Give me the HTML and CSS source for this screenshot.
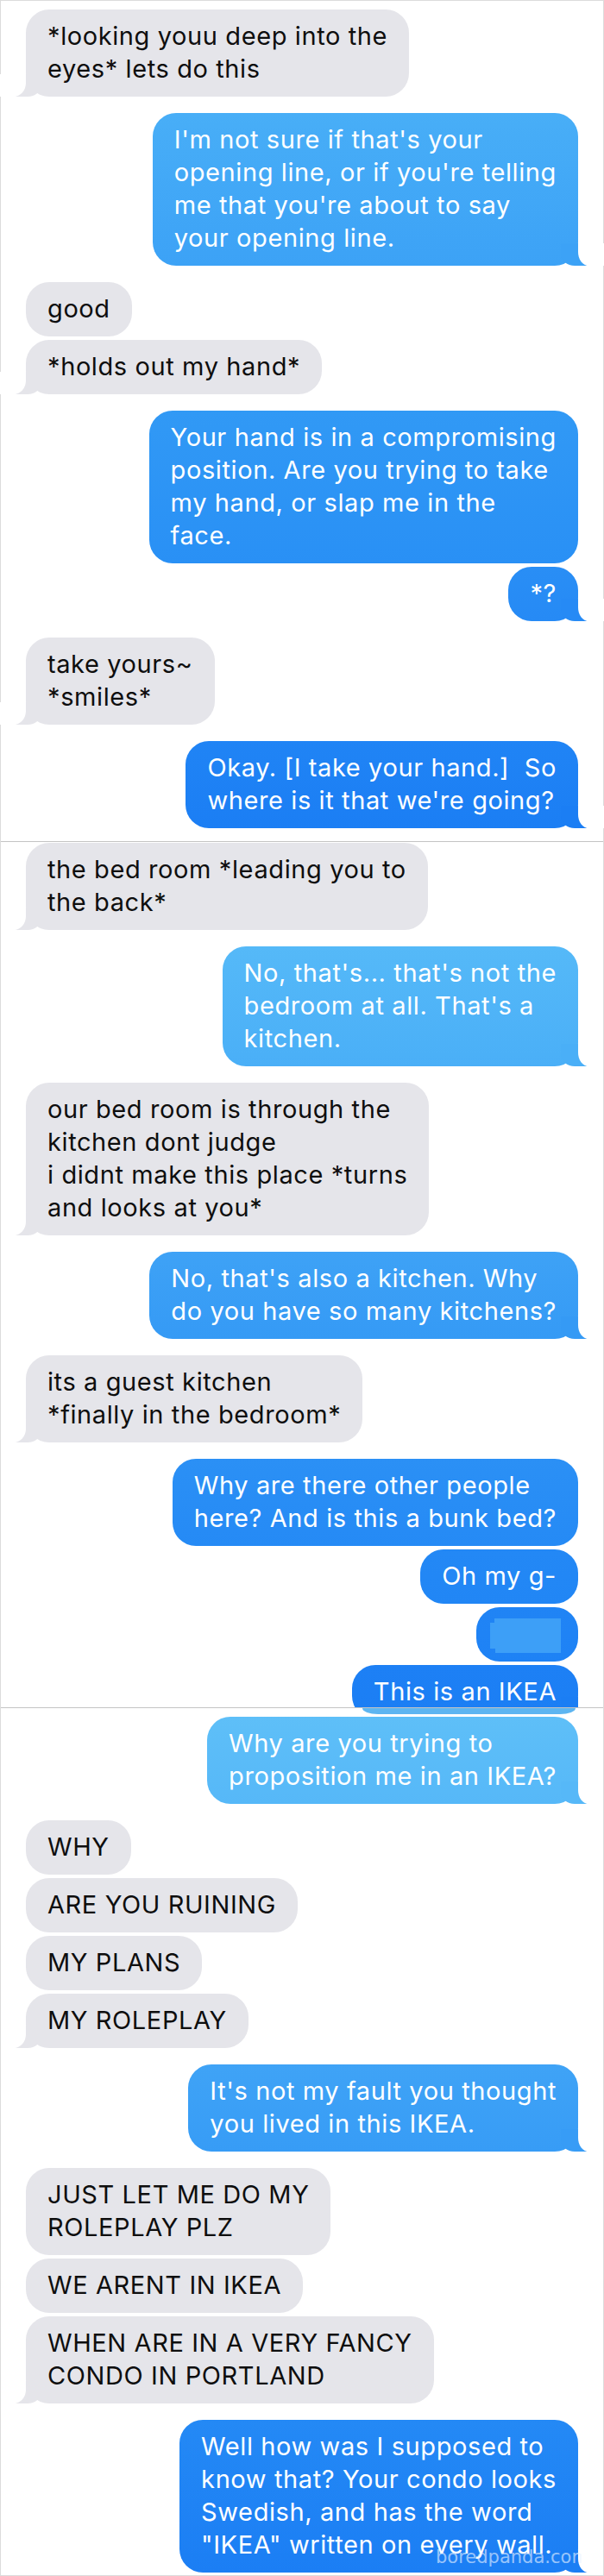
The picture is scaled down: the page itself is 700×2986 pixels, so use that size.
FILE: index.html
```html
<!DOCTYPE html>
<html lang="en">
<head>
<meta charset="utf-8">
<title>Messages</title>
<link rel="stylesheet" href="styles.css">
</head>
<body>
<div class="page">

  <section class="panel panel-1">
    <div class="msg in tail">*looking youu deep into the<br>eyes* lets do this</div>
    <div class="msg out tail shade-a">I'm not sure if that's your<br>opening line, or if you're telling<br>me that you're about to say<br>your opening line.</div>
    <div class="msg in">good</div>
    <div class="msg in same tail">*holds out my hand*</div>
    <div class="msg out shade-b">Your hand is in a compromising<br>position. Are you trying to take<br>my hand, or slap me in the<br>face.</div>
    <div class="msg out same tail shade-c">*?</div>
    <div class="msg in tail">take yours~<br>*smiles*</div>
    <div class="msg out tail shade-d">Okay. [I take your hand.]&nbsp; So<br>where is it that we're going?</div>
  </section>

  <section class="panel panel-2">
    <div class="msg in tail">the bed room *leading you to<br>the back*</div>
    <div class="msg out tail shade-e">No, that's... that's not the<br>bedroom at all. That's a<br>kitchen.</div>
    <div class="msg in tail">our bed room is through the<br>kitchen dont judge<br>i didnt make this place *turns<br>and looks at you*</div>
    <div class="msg out tail shade-f">No, that's also a kitchen. Why<br>do you have so many kitchens?</div>
    <div class="msg in tail">its a guest kitchen<br>*finally in the bedroom*</div>
    <div class="msg out shade-g">Why are there other people<br>here? And is this a bunk bed?</div>
    <div class="msg out same shade-h">Oh my g-</div>
    <div class="msg out same blank shade-i"><span class="blot"></span></div>
    <div class="msg out same tail shade-j">This is an IKEA</div>
  </section>

  <section class="panel panel-3">
    <div class="bubble-edge"></div>
    <div class="msg out tail shade-k">Why are you trying to<br>proposition me in an IKEA?</div>
    <div class="msg in">WHY</div>
    <div class="msg in same">ARE YOU RUINING</div>
    <div class="msg in same">MY PLANS</div>
    <div class="msg in same tail">MY ROLEPLAY</div>
    <div class="msg out tail shade-l">It's not my fault you thought<br>you lived in this IKEA.</div>
    <div class="msg in">JUST LET ME DO MY<br>ROLEPLAY PLZ</div>
    <div class="msg in same">WE ARENT IN IKEA</div>
    <div class="msg in same tail">WHEN ARE IN A VERY FANCY<br>CONDO IN PORTLAND</div>
    <div class="msg out tail shade-m">Well how was I supposed to<br>know that? Your condo looks<br>Swedish, and has the word<br>&quot;IKEA&quot; written on every wall.</div>
    <div class="mark">boredpanda.com</div>
  </section>

</div>
</body>
</html>
```

FILE: styles.css
```css
* {
  box-sizing: border-box;
}

body {
  margin: 0;
  background: #fff;
  font-family: Inter, "Liberation Sans", sans-serif;
}

.page {
  width: 700px;
  border: 1px solid #dcdcdc;
}

/* each panel is one captured screen of the thread */
.panel {
  position: relative;
  display: flex;
  flex-direction: column;
  padding: 0 29px;
}

.panel + .panel {
  border-top: 1px solid #c4c4c4;
}

.panel-1 {
  padding-top: 10px;
  padding-bottom: 15px;
}

.panel-2 {
  height: 1004px;
  padding-top: 1px;
  overflow: hidden;
}

.panel-3 {
  height: 1006px;
  overflow: hidden;
}

/* message bubbles */
.msg {
  position: relative;
  padding: 12px 25px 13px;
  font-size: 29px;
  line-height: 38px;
  letter-spacing: 0.6px;
  white-space: nowrap;
  border-radius: 27px;
}

.msg + .msg {
  margin-top: 19px;
}

.msg.same {
  margin-top: 4px;
}

.in {
  align-self: flex-start;
  background: #e5e5ea;
  color: #0e0e0e;
}

.out {
  --top: #2a8ff5;
  --bot: #1b7ef4;
  align-self: flex-end;
  color: #fff;
  background: linear-gradient(var(--top), var(--bot));
}

/* bubble tails */
.tail::before,
.tail::after {
  content: "";
  position: absolute;
  bottom: 0;
  height: 26px;
}

.in.tail::before {
  left: -12px;
  width: 30px;
  background: #e5e5ea;
  border-bottom-right-radius: 16px 14px;
}

.in.tail::after {
  left: -32px;
  width: 32px;
  background: #fff;
  border-bottom-right-radius: 14px 16px;
}

.out.tail::before {
  right: -10px;
  width: 30px;
  background: var(--bot);
  border-bottom-left-radius: 16px 14px;
}

.out.tail::after {
  right: -32px;
  width: 32px;
  background: #fff;
  border-bottom-left-radius: 12px 16px;
}

/* blue shades follow the screen gradient */
.shade-a { --top: #48aef7; --bot: #3ca2f6; }
.shade-b { --top: #3199f5; --bot: #2990f5; }
.shade-c { --top: #298ef5; --bot: #268af5; }
.shade-d { --top: #2084f5; --bot: #1b7ef4; }
.shade-e { --top: #55b9f8; --bot: #4aaff7; }
.shade-f { --top: #3ea2f6; --bot: #359af5; }
.shade-g { --top: #2b90f5; --bot: #258af5; }
.shade-h { --top: #2388f5; --bot: #2186f5; }
.shade-i { --top: #2084f5; --bot: #1e82f5; }
.shade-j { --top: #1d80f5; --bot: #1b7ef4; }
.shade-k { --top: #5ebff8; --bot: #56b8f8; }
.shade-l { --top: #3fa3f6; --bot: #379cf6; }
.shade-m { --top: #2489f5; --bot: #1b7ef4; }

/* covered attachment */
.msg.blank {
  padding: 13px 20px 10px 16px;
  line-height: 0;
}

.blot {
  display: block;
  width: 82px;
  height: 40px;
  background: #3d9ff7;
  clip-path: polygon(0 5px, 5px 5px, 5px 0, 100% 0, 100% 100%, 6px 100%, 6px calc(100% - 5px), 0 calc(100% - 5px));
  filter: blur(0.4px);
}

/* bottom of a bubble left over from the previous screen */
.bubble-edge {
  align-self: flex-end;
  width: 247px;
  height: 7px;
  margin-right: 3px;
  background: #5db5f1;
  border-radius: 0 0 18px 18px / 0 0 7px 7px;
}

.bubble-edge + .msg {
  margin-top: 3px;
}

.mark {
  position: absolute;
  left: 504px;
  top: 974px;
  width: 169px;
  overflow: hidden;
  white-space: nowrap;
  font-family: "DejaVu Sans", sans-serif;
  font-size: 21px;
  line-height: 21px;
  color: rgba(236, 244, 255, 0.62);
}
```
